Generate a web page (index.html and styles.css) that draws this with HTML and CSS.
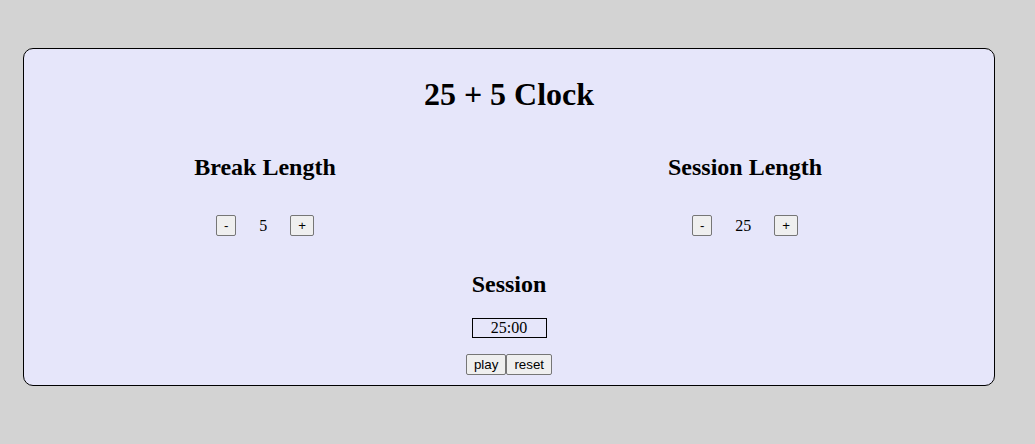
FILE: index.html
```html
<!DOCTYPE html>
<html>
<head>
<meta charset="utf-8">
<link rel="stylesheet" href="styles.css">
</head>
<body>
<div class="clock">
  <h1 class="title">25 + 5 Clock</h1>
  <div class="lengths">
    <div class="length">
      <h2 class="label">Break Length</h2>
      <div class="controls">
        <button class="btn">-</button><span class="value">5</span><button class="btn">+</button>
      </div>
    </div>
    <div class="length">
      <h2 class="label">Session Length</h2>
      <div class="controls">
        <button class="btn">-</button><span class="value">25</span><button class="btn">+</button>
      </div>
    </div>
  </div>
  <h2 class="label session-label">Session</h2>
  <div class="timer">25:00</div>
  <div class="actions"><button class="btn">play</button><button class="btn">reset</button></div>
</div>
</body>
</html>
```

FILE: styles.css
```css
html, body {
  margin: 0;
  padding: 0;
  background: #d3d3d3;
  font-family: "Liberation Serif", "Times New Roman", serif;
  color: #000;
}
body {
  padding: 48px 0 0 23px;
  height: 444px;
  box-sizing: border-box;
}
.clock {
  width: 970px;
  height: 336px;
  background: #e6e6fa;
  border: 1px solid #000;
  border-radius: 10px;
  text-align: center;
}
.title {
  margin: 27px 0 0;
  font-size: 32px;
  line-height: 37px;
  font-weight: bold;
}
.lengths {
  display: grid;
  grid-template-columns: 200px 200px;
  column-gap: 280px;
  padding-left: 141px;
  margin-top: 40px;
}
.length {
  display: flex;
  flex-direction: column;
  align-items: center;
}
.label {
  margin: 0;
  font-size: 24px;
  line-height: 28px;
  font-weight: bold;
}
.controls {
  display: flex;
  align-items: center;
  margin-top: 34px;
}
.value {
  margin: 0 23px;
  font-size: 16px;
  line-height: 18px;
}
.btn {
  font-family: "Liberation Sans", Arial, sans-serif;
  font-size: 13.333px;
  line-height: 15px;
  padding: 2px 7px;
  border: 1px solid #767676;
  border-radius: 2px;
  background: #efefef;
  color: #000;
  margin: 0;
}
.session-label {
  margin-top: 34px;
}
.timer {
  width: 73px;
  margin: 20px auto 0;
  border: 1px solid #000;
  font-size: 16px;
  line-height: 18px;
}
.actions {
  display: flex;
  justify-content: center;
  margin-top: 16px;
}
```
